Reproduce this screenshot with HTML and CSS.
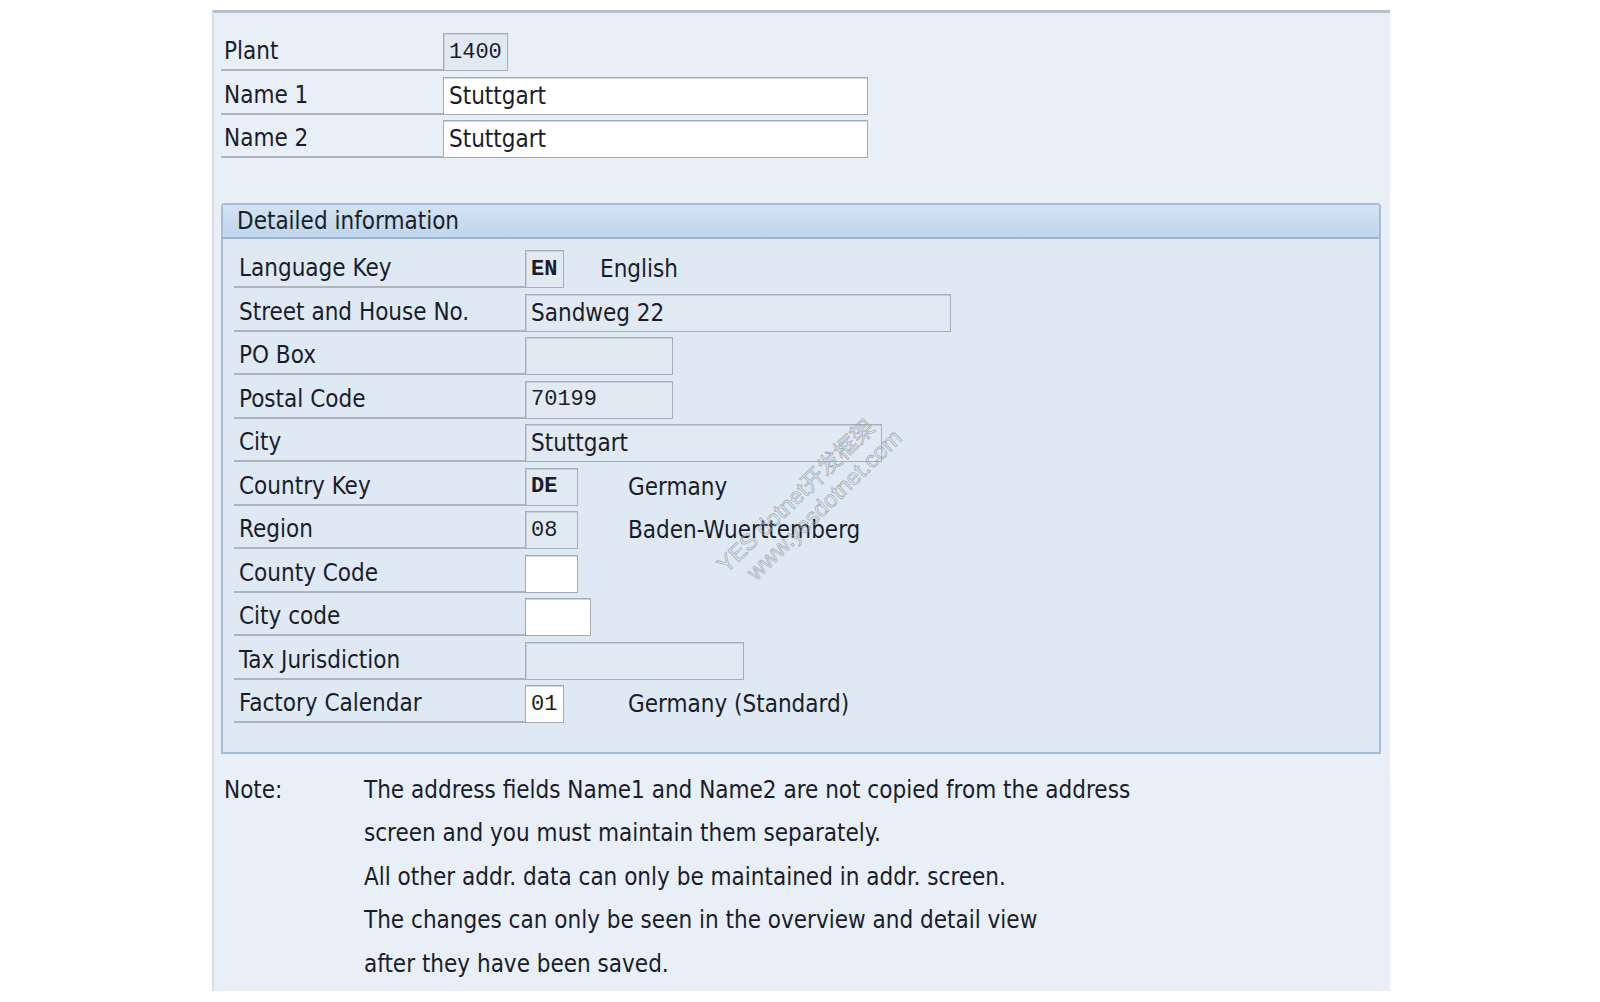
FILE: index.html
```html
<!DOCTYPE html>
<html lang="en">
<head>
    <meta charset="UTF-8">
    <title>Plant Address</title>
    <link rel="stylesheet" href="styles.css">
</head>
<body>
    <div class="screen">
        <div class="head-fields">
            <div class="row">
                <span class="label">Plant</span>
                <span class="field readonly mono w-plant">1400</span>
            </div>
            <div class="row">
                <span class="label">Name 1</span>
                <span class="field w-name">Stuttgart</span>
            </div>
            <div class="row">
                <span class="label">Name 2</span>
                <span class="field w-name">Stuttgart</span>
            </div>
        </div>

        <div class="group">
            <div class="group-title">Detailed information</div>
            <div class="group-body">
                <div class="row">
                    <span class="label">Language Key</span>
                    <span class="cell cell-short"><span class="field readonly mono bold w-2">EN</span></span>
                    <span class="desc">English</span>
                </div>
                <div class="row">
                    <span class="label">Street and House No.</span>
                    <span class="field readonly w-street">Sandweg 22</span>
                </div>
                <div class="row">
                    <span class="label">PO Box</span>
                    <span class="field readonly w-box"></span>
                </div>
                <div class="row">
                    <span class="label">Postal Code</span>
                    <span class="field readonly mono w-box">70199</span>
                </div>
                <div class="row">
                    <span class="label">City</span>
                    <span class="field readonly w-city">Stuttgart</span>
                </div>
                <div class="row">
                    <span class="label">Country Key</span>
                    <span class="cell"><span class="field readonly mono bold w-3">DE</span></span>
                    <span class="desc">Germany</span>
                </div>
                <div class="row">
                    <span class="label">Region</span>
                    <span class="cell"><span class="field readonly mono w-3">08</span></span>
                    <span class="desc">Baden-Wuerttemberg</span>
                </div>
                <div class="row">
                    <span class="label">County Code</span>
                    <span class="field w-3"></span>
                </div>
                <div class="row">
                    <span class="label">City code</span>
                    <span class="field w-4"></span>
                </div>
                <div class="row">
                    <span class="label">Tax Jurisdiction</span>
                    <span class="field readonly w-tax"></span>
                </div>
                <div class="row">
                    <span class="label">Factory Calendar</span>
                    <span class="cell"><span class="field mono w-2">01</span></span>
                    <span class="desc">Germany (Standard)</span>
                </div>
            </div>
        </div>

        <div class="note">
            <span class="note-label">Note:</span>
            <div class="note-text">
                <p>The address fields Name1 and Name2 are not copied from the address</p>
                <p>screen and you must maintain them separately.</p>
                <p>All other addr. data can only be maintained in addr. screen.</p>
                <p>The changes can only be seen in the overview and detail view</p>
                <p>after they have been saved.</p>
            </div>
        </div>

        <div class="stamp">
            <span>YES dotnet开发框架</span>
            <span>www.yesdotnet.com</span>
        </div>
    </div>
</body>
</html>
```

FILE: styles.css
```css
body {
    margin: 0;
    background: #fff;
    font-family: 'DejaVu Sans Condensed', 'Liberation Sans', Arial, 'Noto Sans CJK SC', sans-serif;
    font-size: 24px;
    color: #1a1c2a;
}
.screen {
    position: relative;
    box-sizing: border-box;
    width: 1178px;
    height: 981px;
    margin: 10px 0 0 212px;
    padding: 20px 0 0 7px;
    background: #e8eff7;
    border-top: 3px solid #b3c1cf;
    border-left: 2px solid #d9dee4;
}
.row {
    display: flex;
    align-items: center;
    height: 38px;
    margin-bottom: 5.5px;
}
.label {
    box-sizing: border-box;
    align-self: stretch;
    display: flex;
    align-items: center;
    width: 222px;
    padding-left: 3px;
    border-bottom: 2px solid #adb4bc;
}
.field {
    box-sizing: border-box;
    display: flex;
    align-items: center;
    height: 38px;
    padding: 0 5px;
    background: #fff;
    border: 1px solid #a2abb5;
    box-shadow: inset 0 1px 0 #d0d6dc;
    white-space: nowrap;
}
.readonly {
    background: #e1eaf3;
    border-color: #a6aeb7;
    box-shadow: inset 1px 1px 0 #c6ced6;
}
.mono {
    font-family: 'Liberation Mono', 'Courier New', monospace;
    font-size: 22px;
}
.bold {
    font-weight: bold;
}
.w-plant { width: 65px; }
.w-name { width: 425px; }
.w-2 { width: 39px; }
.w-3 { width: 53px; }
.w-4 { width: 66px; }
.w-box { width: 148px; }
.w-city { width: 357px; }
.w-street { width: 426px; }
.w-tax { width: 219px; }

/* group box */
.group {
    box-sizing: border-box;
    width: 1160px;
    margin-top: 45px;
    background: #dee9f4;
    border: 2px solid #a4bddb;
    border-radius: 4px 4px 0 0;
}
.group-title {
    box-sizing: border-box;
    height: 34px;
    padding-left: 14px;
    line-height: 33px;
    background: linear-gradient(#d4e3f2, #bfd5eb);
    border-bottom: 2px solid #9ab4d2;
}
.group-body {
    padding: 11px 0 23px 11px;
}
.group-body .label {
    width: 291px;
    padding-left: 5px;
}
.cell {
    display: flex;
    width: 103px;
}
.cell-short {
    width: 75px;
}

/* note below the group */
.note {
    display: flex;
    margin-top: 15px;
    line-height: 43.6px;
}
.note-label {
    width: 140px;
    padding-left: 3px;
}
.note-text p {
    margin: 0;
}

.stamp {
    position: absolute;
    left: 485px;
    top: 462px;
    display: flex;
    flex-direction: column;
    transform: rotate(-44deg);
    font-family: 'Liberation Sans', 'Noto Sans CJK SC', sans-serif;
    font-size: 23px;
    line-height: 26px;
    color: transparent;
    -webkit-text-stroke: 0.6px #9aa1a8;
    pointer-events: none;
}
.stamp span:last-child {
    margin-left: 16px;
}
```
